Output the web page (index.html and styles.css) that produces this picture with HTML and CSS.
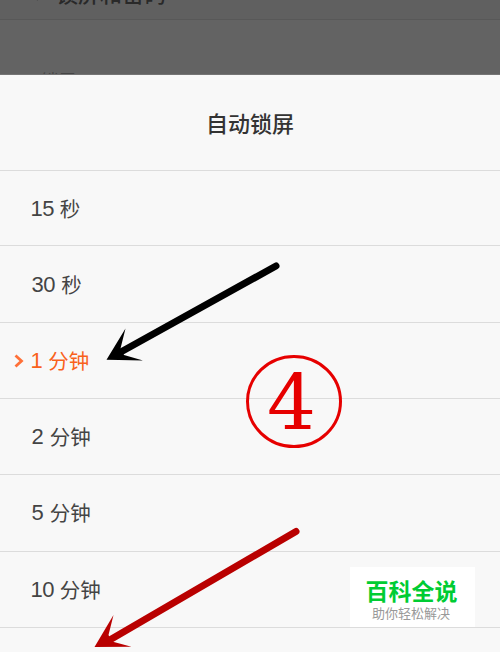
FILE: index.html
```
<!DOCTYPE html>
<html lang="zh-CN">
<head>
  <meta charset="UTF-8">
  <title>自动锁屏</title>
  <link rel="stylesheet" href="styles.css">
</head>
<body>
  <div class="screen">
    <div class="backdrop">
      <div class="topbar">
        <svg class="back" width="10" height="16" viewBox="0 0 10 16"><path d="M8 1L2 8l6 7"/></svg>
        <span>锁屏和密码</span>
      </div>
      <div class="section">锁屏</div>
    </div>

    <div class="sheet">
      <div class="title">自动锁屏</div>
      <ul class="options">
        <li><span class="num one">15</span>秒</li>
        <li><span class="num">30</span>秒</li>
        <li class="selected">
          <svg class="mark" width="10" height="14" viewBox="0 0 10 14"><path d="M1.500 1.500L7.500 7l-6 5.500"/></svg>
          <span class="num one">1</span>分钟
        </li>
        <li><span class="num">2</span>分钟</li>
        <li><span class="num">5</span>分钟</li>
        <li><span class="num one">10</span>分钟</li>
        <li></li>
      </ul>
    </div>

    <div class="watermark">
      <div class="brand">百科全说</div>
      <div class="slogan">助你轻松解决</div>
    </div>

    <svg class="notes" width="500" height="652" viewBox="0 0 500 652">
      <path class="black-line" d="M276 266L119 353"/>
      <path class="black-head" d="M106.500 359.800L125.500 328.500L120.500 348.500L124 355L143 360.500z"/>
      <path class="red-line" d="M296 531.500L108 641"/>
      <path class="red-head" d="M94.500 647L113.500 615L108.500 635L112 641.500L131.500 646.800z"/>
      <ellipse class="ring" cx="294" cy="401.500" rx="46.500" ry="45"/>
      <text class="step" x="291.500" y="429">4</text>
    </svg>
  </div>
</body>
</html>
```

FILE: styles.css
```
body {
  margin: 0;
  font-family: "Liberation Sans", "Noto Sans CJK SC", sans-serif;
  background: #f8f8f8;
}

.screen {
  position: relative;
  width: 500px;
  height: 652px;
  overflow: hidden;
}

.backdrop {
  height: 75px;
  overflow: hidden;
  background: #636363;
  box-sizing: border-box;
  border-bottom: 1px solid #757575;
}

.topbar {
  display: flex;
  align-items: flex-end;
  gap: 16px;
  height: 19px;
  padding-left: 30px;
  background: #606060;
  border-bottom: 1px solid #585858;
  color: #292929;
  font: 500 22px/50px "Noto Sans CJK SC", sans-serif;
}

.topbar span {
  margin-bottom: 2px;
}

.back {
  margin-bottom: 18px;
  fill: none;
  stroke: #444;
  stroke-width: 2;
}

.section {
  padding: 47px 0 0 41px;
  color: #454545;
  font: 17.5px/26px "Noto Sans CJK SC", sans-serif;
}

.sheet {
  background: #f8f8f8;
  color: #444;
}

.title {
  height: 95px;
  border-bottom: 1px solid #dcdcdc;
  color: #333;
  font: 500 22px/95px "Noto Sans CJK SC", sans-serif;
  text-align: center;
}

.options {
  margin: 0;
  padding: 0;
  list-style: none;
}

.options li {
  display: flex;
  align-items: center;
  position: relative;
  box-sizing: border-box;
  height: 76.3px;
  padding: 0 0 1px 31.5px;
  border-bottom: 1px solid #dcdcdc;
  font: 20.5px/30px "Noto Sans CJK SC", sans-serif;
}

.options li:first-child {
  height: 75.4px;
}

.num {
  margin: 2px 6.5px 0 0;
  font: 22px/30px "Liberation Sans", sans-serif;
  letter-spacing: -0.6px;
}

.one {
  margin-left: -1px;
  margin-right: 6px;
}

.options .selected {
  color: #f9611c;
}

.mark {
  position: absolute;
  left: 14px;
  top: 31px;
  fill: none;
  stroke: #ff7038;
  stroke-width: 2.8;
}

.watermark {
  position: absolute;
  left: 350px;
  top: 567px;
  width: 125px;
  height: 60px;
  background: #fff;
  text-align: center;
}

.brand {
  margin-top: 9px;
  padding-right: 2px;
  color: #0c3;
  font: 700 23px/29px "Noto Sans CJK SC", sans-serif;
}

.slogan {
  padding-right: 3px;
  color: #999;
  font: 13px/15px "Noto Sans CJK SC", sans-serif;
}

.notes {
  position: absolute;
  left: 0;
  top: 0;
}

.black-line {
  stroke: #000;
  stroke-width: 7;
  stroke-linecap: round;
}

.red-line {
  stroke: #b90000;
  stroke-width: 7;
  stroke-linecap: round;
}

.red-head {
  fill: #b90000;
}

.ring {
  fill: none;
  stroke: #e60000;
  stroke-width: 3;
}

.step {
  fill: #e60000;
  font: 77px "DejaVu Serif", serif;
  text-anchor: middle;
}
```
